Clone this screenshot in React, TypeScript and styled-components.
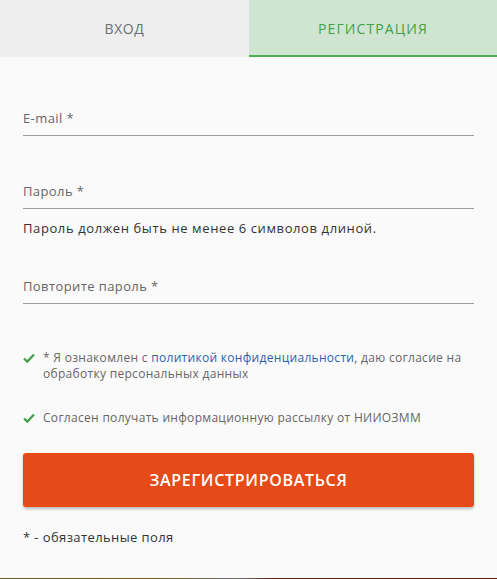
import React from "react";
import styled, { createGlobalStyle } from "styled-components";

const Global = createGlobalStyle`
  html, body { margin: 0; padding: 0; background: #fafafa; }
  body { font-family: "Open Sans", "DejaVu Sans", sans-serif; }
  * { box-sizing: border-box; }
`;

const Page = styled.div`
  width: 497px;
  height: 579px;
  background: #fafafa;
  display: flex;
  flex-direction: column;
  overflow: hidden;
`;

const Tabs = styled.div`
  display: grid;
  grid-template-columns: 249px 1fr;
  height: 57px;
`;

const Tab = styled.div<{ $active?: boolean }>`
  display: flex;
  align-items: center;
  justify-content: center;
  background: ${(p) => (p.$active ? "#d0e5d1" : "#eeeeee")};
  color: ${(p) => (p.$active ? "#43a047" : "#6f6f6f")};
  border-bottom: 2px solid ${(p) => (p.$active ? "#4caf50" : "transparent")};
  font-size: 14px;
  letter-spacing: ${(p) => (p.$active ? "1.1px" : "0.6px")};
  padding-top: 2px;
`;

const Form = styled.div`
  flex: 1;
  padding: 39px 23px 0;
  display: flex;
  flex-direction: column;
`;

const Field = styled.div<{ $mt?: number }>`
  margin-top: ${(p) => p.$mt ?? 0}px;
  padding: 12px 0 7px;
  border-bottom: 1px solid #9e9e9e;
  color: #666;
  font-size: 13px;
  line-height: 20px;
  letter-spacing: 0.4px;
`;

const Hint = styled.div`
  margin-top: 9px;
  color: #333;
  font-size: 13px;
  line-height: 20px;
  letter-spacing: 0.6px;
`;

const Check = styled.div<{ $mt: number }>`
  margin-top: ${(p) => p.$mt}px;
  display: flex;
  gap: 8px;
  font-size: 12px;
  line-height: 16px;
  color: #666;
  letter-spacing: 0.3px;
`;

const CheckIcon = styled.svg`
  flex: none;
  width: 12px;
  height: 16px;
`;

const Link = styled.a`
  color: #2a5fb0;
  text-decoration: none;
`;

const Button = styled.button`
  margin-top: 27px;
  height: 54px;
  border: none;
  border-radius: 3px;
  background: #e64a19;
  color: #fff;
  font-family: inherit;
  font-size: 16px;
  font-weight: 600;
  letter-spacing: 0.7px;
  box-shadow: 0 2px 3px rgba(0, 0, 0, 0.25);
`;

const Footer = styled.div`
  margin-top: 20px;
  font-size: 13px;
  line-height: 20px;
  color: #333;
  letter-spacing: 0.4px;
`;

const Strip = styled.div`
  height: 1px;
  background: linear-gradient(90deg, #6b5a20 0%, #7a5a10 30%, #6a6a6a 48%, #6e2010 55%, #7a1a08 100%);
`;

const Tick = () => (
  <CheckIcon viewBox="0 0 12 16">
    <path d="M1 8.5 L4.3 11.6 L11 4.6" fill="none" stroke="#43a047" strokeWidth="2.2" />
  </CheckIcon>
);

export default function App() {
  return (
    <>
      <Global />
      <Page>
        <Tabs>
          <Tab>ВХОД</Tab>
          <Tab $active>РЕГИСТРАЦИЯ</Tab>
        </Tabs>
        <Form>
          <Field>E-mail *</Field>
          <Field $mt={33}>Пароль *</Field>
          <Hint>Пароль должен быть не менее 6 символов длиной.</Hint>
          <Field $mt={26}>Повторите пароль *</Field>
          <Check $mt={46}>
            <Tick />
            <span>
              * Я ознакомлен с <Link>политикой конфиденциальности</Link>, даю согласие на обработку
              персональных данных
            </span>
          </Check>
          <Check $mt={28}>
            <Tick />
            <span>Согласен получать информационную рассылку от НИИОЗММ</span>
          </Check>
          <Button>ЗАРЕГИСТРИРОВАТЬСЯ</Button>
          <Footer>* - обязательные поля</Footer>
        </Form>
        <Strip />
      </Page>
    </>
  );
}
